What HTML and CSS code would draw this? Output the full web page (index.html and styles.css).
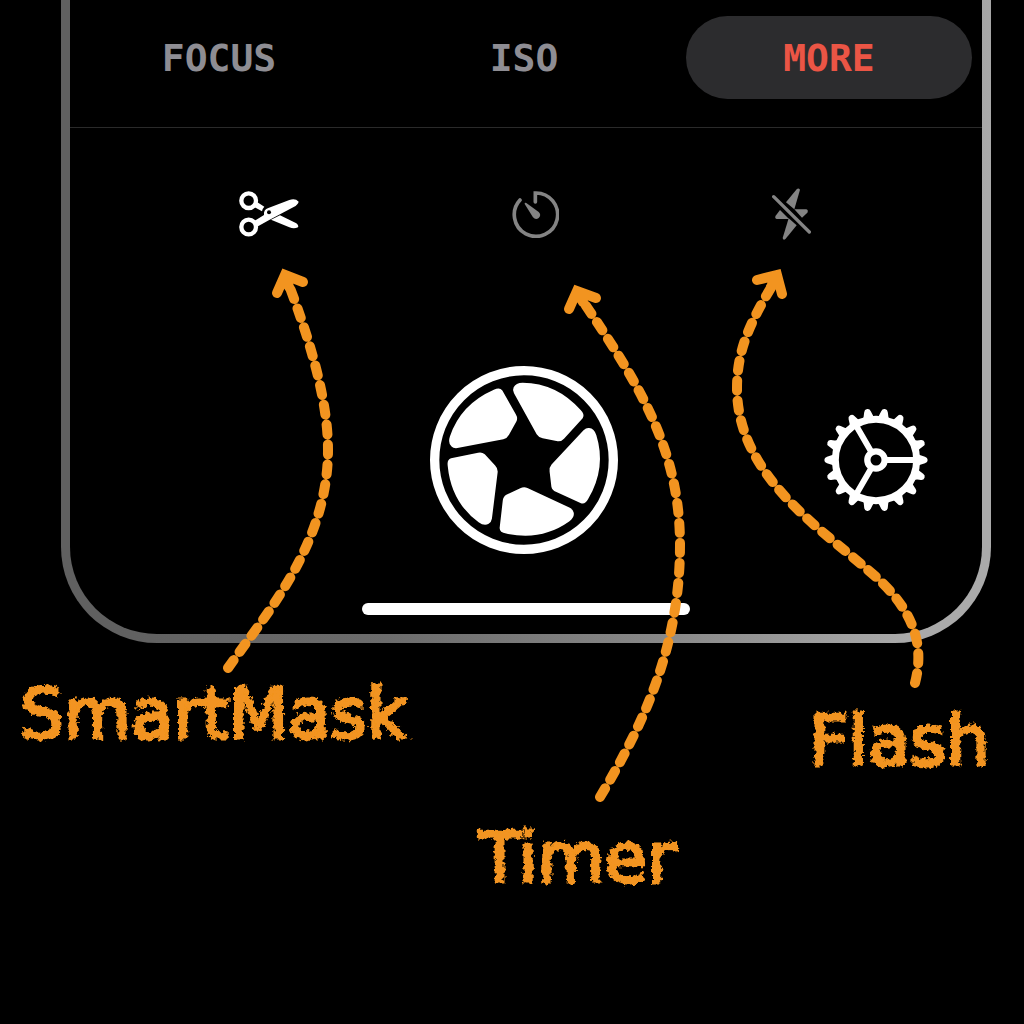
FILE: index.html
```html
<!DOCTYPE html>
<html lang="en">
<head>
<meta charset="utf-8">
<meta name="viewport" content="width=device-width, initial-scale=1">
<title>Camera controls</title>
<link rel="stylesheet" href="styles.css">
</head>
<body>
<main class="guide">
  <section class="phone" aria-label="Camera">
    <nav class="tabs">
      <button class="tab" type="button">FOCUS</button>
      <button class="tab" type="button">ISO</button>
      <button class="tab tab-active" type="button">MORE</button>
    </nav>
    <div class="tools">
      <button class="tool tool-on" type="button" aria-label="SmartMask">
        <svg width="60" height="46" viewBox="56 65 180 138">
          <g fill="none" stroke="currentColor" stroke-width="13"><circle cx="85" cy="94" r="22"/><circle cx="85" cy="173" r="22"/></g>
          <g fill="currentColor">
            <path d="M110 98 L132 112 Q126 118 125 126 L103 114Z"/>
            <path d="M102 155 L131 137 Q129 121 144 116 L207 92 Q225 86 235 97 Q233 106 220 113 L148 151 L109 173Z"/>
            <path d="M152 151 L179 138 L228 162 Q236 168 233 174 Q221 180 207 174Z"/>
          </g>
          <circle cx="146" cy="129" r="6" fill="#000"/>
        </svg>
      </button>
      <button class="tool" type="button" aria-label="Timer">
        <svg width="47" height="47" viewBox="69 62 141 141">
          <path d="M139 95V68A65 65 0 1 1 93 89" fill="none" stroke="currentColor" stroke-width="11" stroke-linecap="round" stroke-linejoin="miter"/>
          <path d="M107 101Q106 96 112 98L149 125Q158 134 149 143Q140 150 132 141Z" fill="currentColor"/>
        </svg>
      </button>
      <button class="tool" type="button" aria-label="Flash">
        <svg width="39" height="52" viewBox="94 54 117 156">
          <path d="M99 80L206 186" stroke="currentColor" stroke-width="10" stroke-linecap="round"/>
          <g fill="currentColor">
            <path d="M168 58Q173 52 178 59L161 118L136 97Z"/>
            <path d="M161 118H197Q204 121 200 128L184 143Z"/>
            <path d="M118 120L145 147H108Q101 144 105 137Z"/>
            <path d="M144 145L168 166L135 206Q128 213 126 204Z"/>
          </g>
        </svg>
      </button>
    </div>
    <div class="capture">
      <button class="shutter" type="button" aria-label="Take photo">
        <svg width="188" height="188" viewBox="30 30 564 564">
          <defs><path id="blade" d="M283 95Q289 81 310 81Q412 82 484 163Q498 177 490 188L434 249Q426 258 415 257L370 248Q358 246 352 236L284 113Q279 102 283 95Z"/></defs>
          <circle cx="312" cy="312" r="268" fill="none" stroke="currentColor" stroke-width="28"/>
          <g fill="currentColor" transform="translate(-2 -1)">
            <use href="#blade"/>
            <use href="#blade" transform="rotate(72 312 312)"/>
            <use href="#blade" transform="rotate(144 312 312)"/>
            <use href="#blade" transform="rotate(216 312 312)"/>
            <use href="#blade" transform="rotate(288 312 312)"/>
          </g>
        </svg>
      </button>
      <button class="settings" type="button" aria-label="Settings">
        <svg width="104" height="104" viewBox="-156 -156 312 312">
          <defs>
            <path id="tooth" d="M120 -22Q132 -13 147 -10Q155 -8 155 0Q155 8 147 10Q132 13 120 22Z"/>
            <g id="teeth"><use href="#tooth"/><use href="#tooth" transform="rotate(20)"/><use href="#tooth" transform="rotate(40)"/><use href="#tooth" transform="rotate(60)"/><use href="#tooth" transform="rotate(80)"/><use href="#tooth" transform="rotate(100)"/></g>
          </defs>
          <g fill="currentColor"><use href="#teeth"/><use href="#teeth" transform="rotate(120)"/><use href="#teeth" transform="rotate(240)"/></g>
          <g fill="none" stroke="currentColor">
            <circle r="122" stroke-width="21"/>
            <circle r="26" stroke-width="19"/>
            <path stroke-width="18" d="M32 0H118M-16 -28L-59 -102M-16 28L-59 102"/>
          </g>
        </svg>
      </button>
    </div>
    <div class="home-bar"></div>
  </section>

  <div class="labels">
    <p class="label">SmartMask</p>
    <p class="label label-flash">Flash</p>
  </div>
  <p class="label label-timer">Timer</p>

  <svg class="arrows" viewBox="0 0 1024 1024" aria-hidden="true">
    <defs>
      <filter id="chalk" x="-5%" y="-5%" width="110%" height="110%">
        <feTurbulence type="fractalNoise" baseFrequency="0.22" numOctaves="3" seed="4" result="grain"/>
        <feDisplacementMap in="SourceGraphic" in2="grain" scale="8" xChannelSelector="R" yChannelSelector="G"/>
      </filter>
    </defs>
    <g class="trail">
      <path d="M228 668C265 615 328 545 328 450C328 400 310 340 287 280"/>
      <path d="M600 797C645 722 680 645 680 545C680 450 640 385 580 297"/>
      <path d="M915 683C926 640 910 605 868 570C820 528 737 475 737 388C737 350 750 322 775 281"/>
    </g>
    <g class="head">
      <path d="M277 293L285 275L303 282M285 275L289 287"/>
      <path d="M569 309L577 291L596 298M577 291L583 302"/>
      <path d="M757 280L777 275L782 294M777 275L771 287"/>
    </g>
  </svg>
</main>
</body>
</html>
```
FILE: styles.css
```css
* {
  box-sizing: border-box;
}

body {
  margin: 0;
  background: #000;
}

button {
  margin: 0;
  padding: 0;
  border: 0;
  background: none;
  color: #fff;
}

svg {
  display: block;
}

.guide {
  position: relative;
  min-height: 100vh;
}

.phone {
  margin: 0 33px 0 61px;
  padding-bottom: 19px;
  border: 9px solid transparent;
  border-top: 0;
  border-radius: 0 0 96px 96px;
  background:
    linear-gradient(#000, #000) padding-box,
    linear-gradient(100deg, #606060 15%, #6c6c6c 42%, #888 68%, #aaa 92%) border-box;
}

.tabs {
  display: grid;
  grid-template-columns: repeat(3, 1fr);
  gap: 19px;
  padding: 16px 10px 28px 6px;
  border-bottom: 1px solid #2a2a2a;
}

.tab {
  height: 83px;
  border-radius: 42px;
  color: #8e8d93;
  font: bold 38px "DejaVu Sans Mono", "Liberation Mono", monospace;
}

.tab-active {
  background: #2c2c2e;
  color: #eb5545;
}

.tools {
  display: flex;
  justify-content: space-between;
  align-items: center;
  height: 112px;
  padding: 60px 171px 0 169px;
}

.tool {
  color: #848484;
}

.tool-on {
  color: #fff;
}

.capture {
  display: grid;
  grid-template-columns: 1fr auto 1fr;
  align-items: center;
  margin-top: 126px;
  padding-right: 4px;
}

.shutter {
  grid-column: 2;
}

.settings {
  justify-self: end;
  margin-right: 50px;
}

.home-bar {
  width: 36%;
  height: 12px;
  margin: 49px auto 0;
  border-radius: 6px;
  background: #fff;
}

.labels {
  display: flex;
  justify-content: space-between;
  padding: 31px 34px 0 20px;
}

.label {
  margin: 0;
  color: #f29420;
  font: 69px/80px Chalkduster, "DejaVu Sans", sans-serif;
  -webkit-text-stroke: 3px #f29420;
  filter: url(#chalk);
}

.label-flash {
  padding-top: 27px;
}

.label-timer {
  margin-top: 37px;
  padding-left: 130px;
  text-align: center;
}

.arrows {
  position: absolute;
  top: 0;
  left: 0;
  width: 100%;
  pointer-events: none;
}

.trail,
.head {
  fill: none;
  stroke: #f29420;
  stroke-width: 10;
  stroke-linecap: round;
}

.trail {
  stroke-dasharray: 10 10;
}
```
